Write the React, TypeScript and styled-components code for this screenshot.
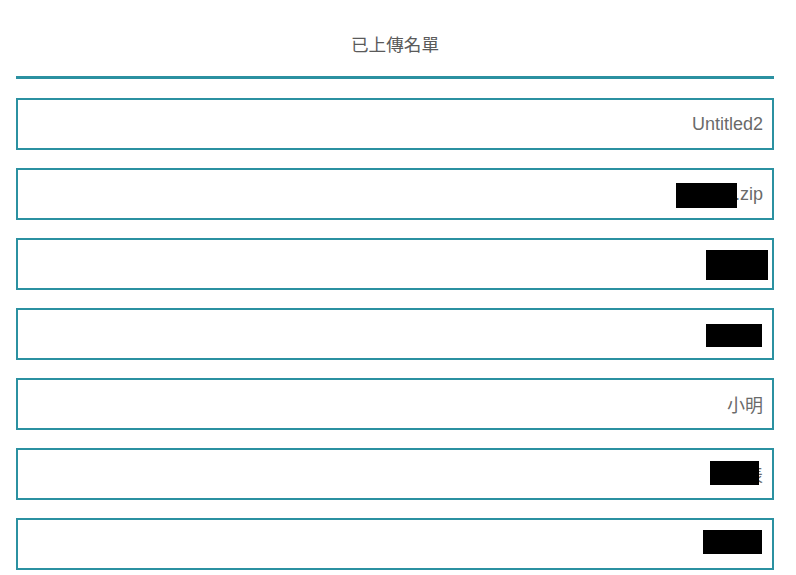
import React from "react";
import styled, { createGlobalStyle } from "styled-components";

const Global = createGlobalStyle`
  html, body { margin: 0; padding: 0; background: #fff; }
  body { font-family: "Liberation Sans", Arial, "Noto Sans CJK TC", sans-serif; }
`;

const Page = styled.div`
  width: 758px;
  padding: 0 22px 0 16px;
`;

const Header = styled.div`
  height: 76px;
  padding-top: 10px;
  box-sizing: border-box;
  display: flex;
  align-items: center;
  justify-content: center;
  font-size: 17.6px;
  color: #5a5a5a;
  font-family: "Noto Sans CJK TC", "Liberation Sans", sans-serif;
`;

const Rule = styled.div`
  height: 3px;
  background: #2b91a1;
  margin-bottom: 19px;
`;

const List = styled.div`
  display: flex;
  flex-direction: column;
  gap: 18px;
`;

const Row = styled.div`
  height: 52px;
  box-sizing: border-box;
  border: 2px solid #2b91a1;
  display: flex;
  align-items: center;
  justify-content: flex-end;
  padding-right: 9px;
  font-size: 18px;
  color: #6a6a6a;
  font-family: "Liberation Sans", Arial, "Noto Sans CJK TC", sans-serif;
`;

const Redact = styled.span<{ $w: number; $h: number; $dy?: number; $dx?: number }>`
  display: inline-block;
  width: ${(p) => p.$w}px;
  height: ${(p) => p.$h}px;
  background: #000;
  margin-right: ${(p) => p.$dx ?? 0}px;
  position: relative;
  z-index: 1;
  top: ${(p) => p.$dy ?? 0}px;
`;

const Tail = styled.span<{ $gap?: number }>`
  margin-left: ${(p) => p.$gap ?? 0}px;
`;

export default function App() {
  return (
    <Page>
      <Global />
      <Header>已上傳名單</Header>
      <Rule />
      <List>
        <Row>Untitled2</Row>
        <Row>
          <Redact $w={61} $h={25} $dy={1} />
          <Tail $gap={-2}>.zip</Tail>
        </Row>
        <Row>
          <Redact $w={62} $h={30} $dx={-5} $dy={1} />
        </Row>
        <Row>
          <Redact $w={56} $h={23} $dx={1} $dy={1} />
        </Row>
        <Row>小明</Row>
        <Row>
          <Redact $w={49} $h={24} $dx={-14} $dy={-1} />
          <Tail>表</Tail>
        </Row>
        <Row>
          <Redact $w={59} $h={24} $dx={1} $dy={-2} />
        </Row>
      </List>
    </Page>
  );
}
